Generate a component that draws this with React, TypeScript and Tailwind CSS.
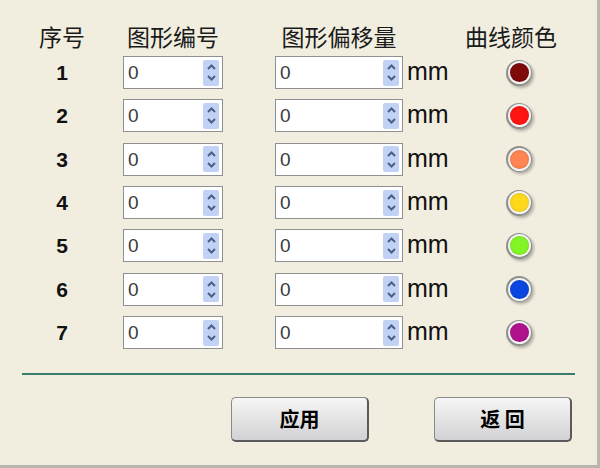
import React from "react";

const rows = [
  { n: 1, color: "#7f0a0a" },
  { n: 2, color: "#ff1414" },
  { n: 3, color: "#ff8552" },
  { n: 4, color: "#ffd81c" },
  { n: 5, color: "#84f524" },
  { n: 6, color: "#0a46e0" },
  { n: 7, color: "#b0128e" },
];

const cjk = { fontFamily: '"Noto Sans CJK SC", "Noto Sans", sans-serif' };
const latin = { fontFamily: '"Liberation Sans", Arial, sans-serif' };

function Spin() {
  return (
    <div className="w-[16px] h-[26px] rounded-[2px] bg-[#c2d2f4] flex flex-col items-center justify-center gap-[5px]">
      <svg width="9" height="6" viewBox="0 0 9 6">
        <path d="M1 5 L4.5 1.5 L8 5" fill="none" stroke="#4a5f8a" strokeWidth="2" />
      </svg>
      <svg width="9" height="6" viewBox="0 0 9 6">
        <path d="M1 1 L4.5 4.5 L8 1" fill="none" stroke="#4a5f8a" strokeWidth="2" />
      </svg>
    </div>
  );
}

function NumberBox({ width }: { width: string }) {
  return (
    <div
      className={`${width} h-[33px] bg-white border border-[#8e9091] flex items-center pl-[4px] pr-[3px] box-border`}
    >
      <span className="flex-1 text-[19px] text-[#3a3a3a] leading-none" style={latin}>
        0
      </span>
      <Spin />
    </div>
  );
}

function ColorDot({ color }: { color: string }) {
  return (
    <div className="w-[26px] h-[26px] rounded-full bg-[#8f8f8c] p-[1.5px] shadow-[2px_2px_3px_rgba(0,0,0,0.28)]">
      <div className="w-full h-full rounded-full bg-[#f4f4f4] p-[2px]">
        <div
          className="w-full h-full rounded-full shadow-[inset_0_0_2px_rgba(0,0,0,0.25)]"
          style={{ backgroundColor: color }}
        />
      </div>
    </div>
  );
}

function Button({ label }: { label: string }) {
  return (
    <button
      className="w-[138px] h-[45px] rounded-[5px] border border-[#8a8a8a] border-r-[2px] border-b-[2px] border-r-[#5a5a5a] border-b-[#5a5a5a] bg-gradient-to-b from-[#f6f6f6] to-[#d2d2d4] text-[20px] font-bold text-black flex items-center justify-center"
      style={cjk}
    >
      {label}
    </button>
  );
}

export default function App() {
  return (
    <div className="w-[600px] h-[468px] bg-[#f1eee0] border-r-[3px] border-b-[3px] border-[#b9b7ad] box-border overflow-hidden">
      <div className="pt-[22px]">
        {/* column titles */}
        <div className="h-[29px] flex items-center pl-[22px] text-[23px] text-[#1a1a1a]" style={cjk}>
          <div className="w-[80px] text-center leading-none">序号</div>
          <div className="ml-[21px] w-[100px] text-center leading-none">图形编号</div>
          <div className="ml-[52px] w-[128px] text-center leading-none">图形偏移量</div>
          <div className="ml-[53px] w-[110px] text-center leading-none">曲线颜色</div>
        </div>

        {/* parameter rows */}
        <div>
          {rows.map((r) => (
            <div key={r.n} className="h-[43.33px] flex items-center pl-[22px]">
              <div className="w-[80px] text-center text-[21px] font-bold text-[#111]" style={latin}>
                {r.n}
              </div>
              <div className="ml-[21px]">
                <NumberBox width="w-[100px]" />
              </div>
              <div className="ml-[52px]">
                <NumberBox width="w-[128px]" />
              </div>
              <div className="ml-[4px] w-[60px] text-[25px] text-[#111] leading-none pb-[2px]" style={latin}>
                mm
              </div>
              <div className="ml-[39px]">
                <ColorDot color={r.color} />
              </div>
            </div>
          ))}
        </div>

        {/* separator */}
        <div className="mt-[19px] mx-[22px] h-[2px] bg-[#3a7d6c]" />

        {/* actions */}
        <div className="mt-[22px] flex pl-[231px] gap-[65px]">
          <Button label="应用" />
          <Button label="返 回" />
        </div>
      </div>
    </div>
  );
}
